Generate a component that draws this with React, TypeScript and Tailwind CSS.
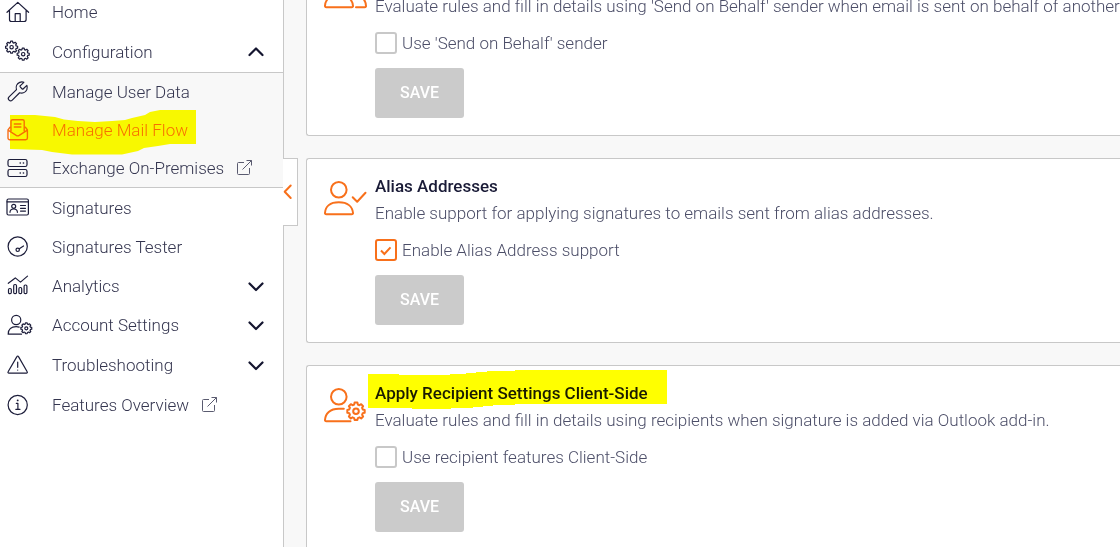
import React from "react";

function gearPath(cx: number, cy: number, outer: number, inner: number, teeth = 8): string {
  const step = (Math.PI * 2) / teeth;
  const points: string[] = [];
  for (let i = 0; i < teeth; i++) {
    const a = i * step;
    const corners: [number, number][] = [
      [a - step * 0.34, inner],
      [a - step * 0.2, outer],
      [a + step * 0.2, outer],
      [a + step * 0.34, inner],
    ];
    for (const [angle, r] of corners) {
      points.push(`${(cx + Math.cos(angle) * r).toFixed(2)} ${(cy + Math.sin(angle) * r).toFixed(2)}`);
    }
  }
  return `M${points.join("L")}Z`;
}

function NavIcon({ children }: { children: React.ReactNode }) {
  return (
    <svg
      aria-hidden="true"
      className="h-6 w-[30px] shrink-0 text-[#1c1d3a] group-aria-[current]:text-[#f8701b]"
      viewBox="0 0 30 24"
      fill="none"
      stroke="currentColor"
      strokeWidth="1.2"
      strokeLinecap="round"
      strokeLinejoin="round"
    >
      {children}
    </svg>
  );
}

const icons = {
  home: (
    <NavIcon>
      <path d="M3 12.3 13.8 2.4l10.8 9.9M5.5 10.4v9.1a2 2 0 0 0 2 2h12.6a2 2 0 0 0 2-2v-9.1M11.2 21.3v-7.6h5v7.6" />
    </NavIcon>
  ),
  gears: (
    <NavIcon>
      <path d={gearPath(7.6, 7.2, 6.1, 4.7)} />
      <circle cx="7.6" cy="7.2" r="1.7" />
      <path d={gearPath(19.2, 14.2, 6.1, 4.7)} />
      <circle cx="19.2" cy="14.2" r="1.7" />
    </NavIcon>
  ),
  wrench: (
    <NavIcon>
      <path
        transform="translate(2 -.6) scale(.98)"
        d="M14.7 6.3a1 1 0 0 0 0 1.6l1.6 1.6a1 1 0 0 0 1.4 0l3.6-3.4c.5 1.2.5 2.7 0 4.2a6 6 0 0 1-7.4 3.3l-7.5 7.6a2.3 2.3 0 0 1-3.3-3.3l7.6-7.5a6 6 0 0 1 3.3-7.4c1.5-.6 3-.6 4.2 0z"
      />
    </NavIcon>
  ),
  mail: (
    <NavIcon>
      <path
        strokeWidth="1.4"
        d="M7 13V3.200a1.500 1.500 0 0 1 1.500-1.500h10.200a1.500 1.500 0 0 1 1.500 1.500V13M10.300 6h6.600M10.300 9h6.600M6 9.200 4 12v8a1.700 1.700 0 0 0 1.700 1.700h16A1.700 1.700 0 0 0 23.400 20v-8l-2-2.800M4 12.200l8.200 5.200a3 3 0 0 0 3 0l8.200-5.200"
      />
    </NavIcon>
  ),
  servers: (
    <NavIcon>
      <rect x="4" y="3.500" width="19" height="7" rx="1.800" />
      <rect x="4" y="13.500" width="19" height="7" rx="1.800" />
      <path strokeWidth="1.600" d="M16.200 7h.1M19.400 7h.1M16.200 17h.1M19.400 17h.1" />
    </NavIcon>
  ),
  card: (
    <NavIcon>
      <rect x="3" y="3" width="21.400" height="16" rx="1.500" />
      <path d="M3 5.800h21.400M16.500 9.500h5M16.500 12.300h5M16.500 15.100h5M6 16.300c0-2.400 1.600-3.300 3.700-3.300s3.700.9 3.700 3.300" />
      <circle cx="9.700" cy="10.300" r="2" />
    </NavIcon>
  ),
  gauge: (
    <NavIcon>
      <circle cx="13.700" cy="11.500" r="9.600" />
      <circle cx="13.700" cy="14.800" r="1.700" />
      <path d="m15.300 13.700 4.200-2.700" />
    </NavIcon>
  ),
  chart: (
    <NavIcon>
      <path d="m4.300 9.300 7-5.400 5.200 4.200 7-6" />
      <rect x="4.500" y="14.500" width="2.800" height="5.200" rx="1.200" />
      <rect x="9.700" y="10.500" width="2.800" height="9.200" rx="1.200" />
      <rect x="14.900" y="13.500" width="2.800" height="6.200" rx="1.200" />
      <rect x="20.100" y="11" width="2.800" height="8.700" rx="1.200" />
    </NavIcon>
  ),
  userGear: (
    <NavIcon>
      <circle cx="12.200" cy="7" r="4.600" />
      <path d="M17.500 21.200H4.200c0-5.500 3.200-7.500 8-7.500 1.200 0 2.200.1 3 .4" />
      <path d={gearPath(22.3, 15.3, 5.5, 4.3)} />
      <circle cx="22.300" cy="15.300" r="1.500" />
    </NavIcon>
  ),
  warning: (
    <NavIcon>
      <path d="M12.900 3.600 4.100 18.800a.9.9 0 0 0 .8 1.400h17.500a.9.9 0 0 0 .8-1.400L14.500 3.600a.9.9 0 0 0-1.600 0zM13.700 9v5.300M13.700 17v.1" />
    </NavIcon>
  ),
  info: (
    <NavIcon>
      <circle cx="13.700" cy="12" r="9.600" />
      <path d="M12.300 10.300h1.600v5.900M11.800 16.300h4.200" />
      <path strokeWidth="1.800" d="M13.700 7.300v.1" />
    </NavIcon>
  ),
};

function External() {
  return (
    <svg
      aria-hidden="true"
      className="ml-[13px] size-4 shrink-0 text-[#5a5b70]"
      viewBox="0 0 16 16"
      fill="none"
      stroke="currentColor"
      strokeWidth="1"
    >
      <path d="M7 2.500H1.500a1 1 0 0 0-1 1v10a1 1 0 0 0 1 1h10a1 1 0 0 0 1-1V8M9.500.5h5v5M14.500.5l-9 9" />
    </svg>
  );
}

function Chevron({ up = false }: { up?: boolean }) {
  return (
    <svg
      aria-hidden="true"
      className="ml-auto h-3 w-4 shrink-0 text-[#14152f]"
      viewBox="0 0 16 12"
      fill="none"
      stroke="currentColor"
      strokeWidth="2.200"
      strokeLinecap="round"
      strokeLinejoin="round"
    >
      <path d={up ? "m1.500 9 6.500-6.500L14.500 9" : "M1.500 3.500 8 10l6.500-6.500"} />
    </svg>
  );
}

const rowClass = "group flex w-full items-center gap-[18px] pr-[19px] pl-1 text-left leading-6";

function NavLink(props: {
  icon: React.ReactNode;
  label: string;
  height: string;
  active?: boolean;
  external?: boolean;
}) {
  return (
    <a
      href="#"
      aria-current={props.active ? "page" : undefined}
      className={`${rowClass} ${props.height} ${props.active ? "text-[#f8701b]" : "text-[#34354f]"}`}
    >
      {props.icon}
      <span className="flex items-center whitespace-nowrap">
        {props.label}
        {props.external && <External />}
      </span>
    </a>
  );
}

function NavGroup(props: { icon: React.ReactNode; label: string; height: string; open?: boolean }) {
  return (
    <button type="button" aria-expanded={!!props.open} className={`${rowClass} ${props.height} text-[#34354f]`}>
      {props.icon}
      <span>{props.label}</span>
      <Chevron up={props.open} />
    </button>
  );
}

function Sidebar() {
  return (
    <aside className="relative w-[284px] shrink-0 border-r border-[#c8c8c8] bg-white">
      <nav className="-mt-2">
        <NavLink icon={icons.home} label="Home" height="h-10" />
        <NavGroup icon={icons.gears} label="Configuration" height="h-10" open />
        <div className="border-y border-[#c8c8c8] bg-[#f8f8f8]">
          <NavLink icon={icons.wrench} label="Manage User Data" height="h-[38px]" />
          <div className="relative">
            <NavLink icon={icons.mail} label="Manage Mail Flow" height="h-[38px]" active />
            <svg
              aria-hidden="true"
              className="pointer-events-none absolute -top-1 left-[10px] h-[48px] w-[186px] mix-blend-multiply"
              viewBox="10 107 186 48"
              fill="#ffff00"
            >
              <path d="M10 115H35L45 116 55 117 64 119.500 78 121 95 122 112 121 125 120 132 118 145 115 150 112 160 110H196V144H170L158 146 144 148 138 151 122 154.500H72L52 152 42 150 10 149Z" />
            </svg>
          </div>
          <NavLink icon={icons.servers} label="Exchange On-Premises" height="h-[38px]" external />
        </div>
        <NavLink icon={icons.card} label="Signatures" height="h-[39px]" />
        <NavLink icon={icons.gauge} label="Signatures Tester" height="h-[39px]" />
        <NavGroup icon={icons.chart} label="Analytics" height="h-[39px]" />
        <NavGroup icon={icons.userGear} label="Account Settings" height="h-10" />
        <NavGroup icon={icons.warning} label="Troubleshooting" height="h-10" />
        <NavLink icon={icons.info} label="Features Overview" height="h-10" external />
      </nav>
      <button
        type="button"
        aria-label="Collapse menu"
        className="absolute top-[158px] left-full flex h-[68px] w-[15px] items-center border border-l-0 border-[#c8c8c8] bg-white text-[#f8701b]"
      >
        <svg
          aria-hidden="true"
          className="h-4 w-[10px]"
          viewBox="0 0 10 16"
          fill="none"
          stroke="currentColor"
          strokeWidth="2"
          strokeLinecap="round"
          strokeLinejoin="round"
        >
          <path d="M7.700 1.500 1.700 7.800l6 6.200" />
        </svg>
      </button>
    </aside>
  );
}

const cardIconProps = {
  "aria-hidden": true,
  fill: "none",
  stroke: "currentColor",
  strokeWidth: 2,
  strokeLinecap: "round",
  strokeLinejoin: "round",
} as const;

function Card(props: {
  id: string;
  icon: React.ReactNode;
  title?: string;
  highlight?: React.ReactNode;
  description: string;
  option: string;
  checked?: boolean;
  className: string;
}) {
  return (
    <section className={`flex gap-2 border-b border-l border-[#c8c8c8] bg-white pb-[17px] pl-4 ${props.className}`}>
      {props.icon}
      <div className="min-w-0 flex-1">
        {props.title && (
          <h2 className="relative leading-[27px] font-medium text-[#1a1b37]">
            {props.title}
            {props.highlight}
          </h2>
        )}
        <p className="overflow-hidden leading-[27px] whitespace-nowrap text-[#4c4e68]">{props.description}</p>
        <div className="mt-3 flex h-[22px] items-center gap-[5px]">
          <span className="grid size-[22px] shrink-0">
            <input
              id={props.id}
              type="checkbox"
              defaultChecked={props.checked}
              className="peer col-start-1 row-start-1 size-[22px] appearance-none rounded-[3px] border-2 border-[#c8c8c8] bg-white checked:border-[#f8701b]"
            />
            <svg
              aria-hidden="true"
              className="pointer-events-none invisible col-start-1 row-start-1 size-[22px] text-[#f8701b] peer-checked:visible"
              viewBox="0 0 22 22"
              fill="none"
              stroke="currentColor"
              strokeWidth="2"
            >
              <path d="m6 11.500 3.400 3.500 6.100-6.700" />
            </svg>
          </span>
          <label htmlFor={props.id} className="leading-6 text-[#4c4e68]">
            {props.option}
          </label>
        </div>
        <button
          type="button"
          className="mt-[14px] block h-[50px] w-[89px] rounded-[3px] bg-[#cbcbcb] text-base font-medium text-white"
        >
          SAVE
        </button>
      </div>
    </section>
  );
}

export default function App() {
  return (
    <div className="flex h-screen overflow-hidden bg-[#f8f8f8] font-['Roboto',sans-serif] text-[17px] font-light">
      <Sidebar />
      <main className="flex min-w-0 flex-1 flex-col gap-[22px] pl-[22px]">
        <Card
          id="send-on-behalf"
          className="-mt-[7px] rounded-bl-[3px]"
          icon={
            <svg {...cardIconProps} className="h-4 w-11 shrink-0 text-[#f8701b]" viewBox="0 20 44 16">
              <path d="M3.200 34.300a1.200 1.200 0 0 1-1.200-1.300C2.300 26.500 7 22.200 15.800 22.200S29.500 26.500 30 33a1.200 1.200 0 0 1-1.200 1.300zM33 34.300h8.800A1.200 1.200 0 0 0 43 33c-.3-5-2.500-8.500-7-10" />
            </svg>
          }
          description="Evaluate rules and fill in details using 'Send on Behalf' sender when email is sent on behalf of another user"
          option="Use 'Send on Behalf' sender"
        />
        <Card
          id="alias"
          className="rounded-l-[3px] border-t pt-[14px]"
          icon={
            <svg {...cardIconProps} className="mt-[7px] h-9 w-11 shrink-0 text-[#f8701b]" viewBox="0 0 44 36">
              <circle cx="15.800" cy="9.700" r="7.800" />
              <path d="M3.200 34.300a1.200 1.200 0 0 1-1.200-1.300C2.300 26.500 7 22.200 15.800 22.200S29.500 26.500 30 33a1.200 1.200 0 0 1-1.200 1.300zM29.700 17.300l4.500 4.500 8.300-9" />
            </svg>
          }
          title="Alias Addresses"
          description="Enable support for applying signatures to emails sent from alias addresses."
          option="Enable Alias Address support"
          checked
        />
        <Card
          id="client-side"
          className="rounded-l-[3px] border-t pt-[14px]"
          icon={
            <svg {...cardIconProps} className="mt-[7px] h-9 w-11 shrink-0 text-[#f8701b]" viewBox="0 0 44 36">
              <circle cx="15.800" cy="9.700" r="7.800" />
              <path d="M27.500 34.300H3.200A1.200 1.200 0 0 1 2 33c.3-6.500 5-11.300 13.800-11.300h5" />
              <path d={gearPath(33, 24.3, 8.8, 7)} />
              <circle cx="33" cy="24.300" r="2.800" />
            </svg>
          }
          title="Apply Recipient Settings Client-Side"
          highlight={
            <svg
              aria-hidden="true"
              className="pointer-events-none absolute -top-[10px] -left-[7px] h-[39px] w-[299px] mix-blend-multiply"
              viewBox="368 370 299 39"
              fill="#ffff00"
            >
              <path d="M368 374H399V375H450V374H466V373H476V372H487V371H515V370H667V404H515V405H493V406H483V407H473V408H451V409H412V408H368Z" />
            </svg>
          }
          description="Evaluate rules and fill in details using recipients when signature is added via Outlook add-in."
          option="Use recipient features Client-Side"
        />
      </main>
    </div>
  );
}
